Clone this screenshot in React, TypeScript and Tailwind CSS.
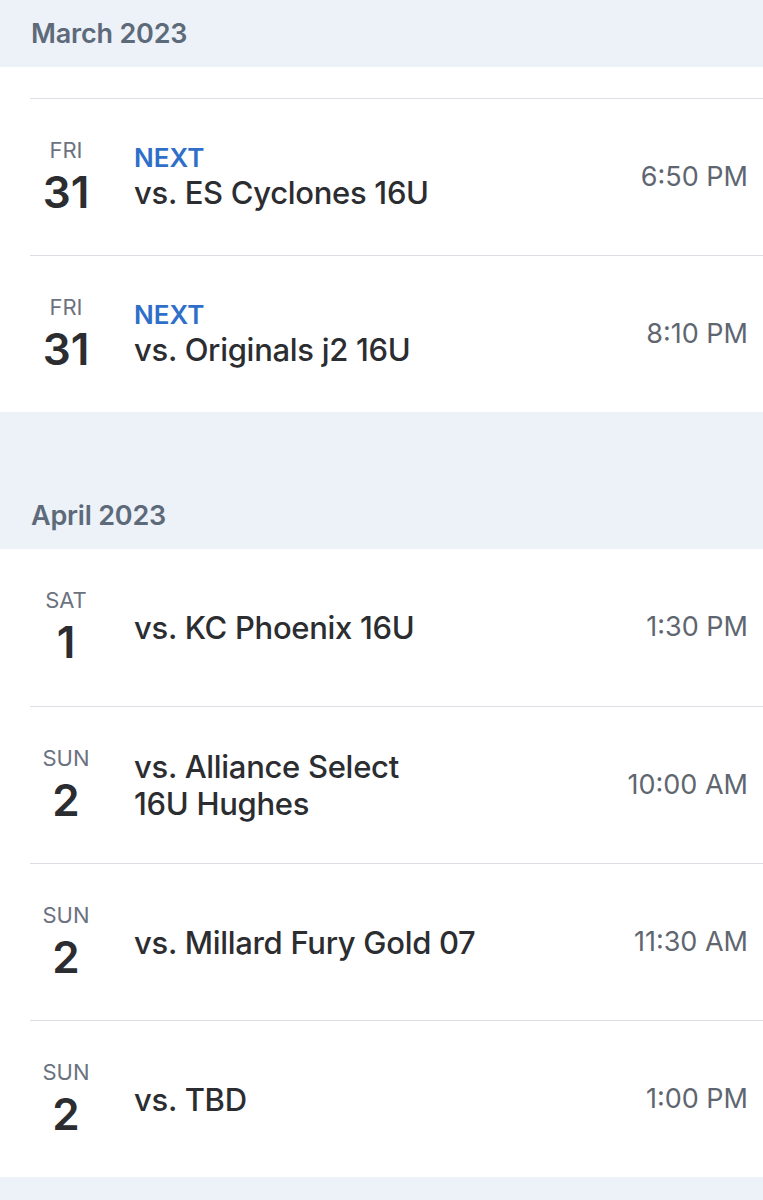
import React from "react";

type Game = {
  day: string;
  date: string;
  title: string[];
  time: string;
  next?: boolean;
};

const march: Game[] = [
  { day: "FRI", date: "31", title: ["vs. ES Cyclones 16U"], time: "6:50 PM", next: true },
  { day: "FRI", date: "31", title: ["vs. Originals j2 16U"], time: "8:10 PM", next: true },
];

const april: Game[] = [
  { day: "SAT", date: "1", title: ["vs. KC Phoenix 16U"], time: "1:30 PM" },
  { day: "SUN", date: "2", title: ["vs. Alliance Select", "16U Hughes"], time: "10:00 AM" },
  { day: "SUN", date: "2", title: ["vs. Millard Fury Gold 07"], time: "11:30 AM" },
  { day: "SUN", date: "2", title: ["vs. TBD"], time: "1:00 PM" },
];

function MonthHeader({ label }: { label: string }) {
  return (
    <div className="h-[67px] flex items-center pl-[31px] bg-[#edf1f8]">
      <h2 className="text-[27px] font-semibold text-[#5d6a7a] tracking-[-0.2px] mt-[1px]">{label}</h2>
    </div>
  );
}

function GameRow({ game, first }: { game: Game; first?: boolean }) {
  return (
    <div className={`ml-[30px] h-[157px] flex items-center ${first ? "" : "border-t border-[#dddee4]"}`}>
      {/* fecha */}
      <div className="w-[72px] flex flex-col items-center -mt-[3px]">
        <span className="text-[22px] leading-[26px] text-[#6b7280]">{game.day}</span>
        <span className="text-[44px] leading-[46px] font-semibold text-[#2b2d31] mt-[6px]">{game.date}</span>
      </div>
      <div className="flex-1 pl-[32px]">
        {game.next && (
          <div className="text-[26px] leading-[32px] font-semibold text-[#2f6fc9] -mt-[2px]">NEXT</div>
        )}
        {game.title.map((line, i) => (
          <div key={i} className="text-[31px] leading-[37px] font-medium text-[#2b2d31] tracking-[-0.3px]">
            {line}
          </div>
        ))}
      </div>
      <div className="pr-[15px] text-[27px] text-[#5f6670]">{game.time}</div>
    </div>
  );
}

export default function App() {
  return (
    <div className="w-[763px] min-h-[1200px] bg-[#edf1f8] font-['Inter',sans-serif]">
      <MonthHeader label="March 2023" />
      <section className="bg-white">
        <div className="h-[31px]" />
        {march.map((g, i) => (
          <GameRow key={i} game={g} />
        ))}
      </section>
      <div className="h-[70px]" />
      <MonthHeader label="April 2023" />
      <section className="bg-white">
        {april.map((g, i) => (
          <GameRow key={i} game={g} first={i === 0} />
        ))}
      </section>
    </div>
  );
}
